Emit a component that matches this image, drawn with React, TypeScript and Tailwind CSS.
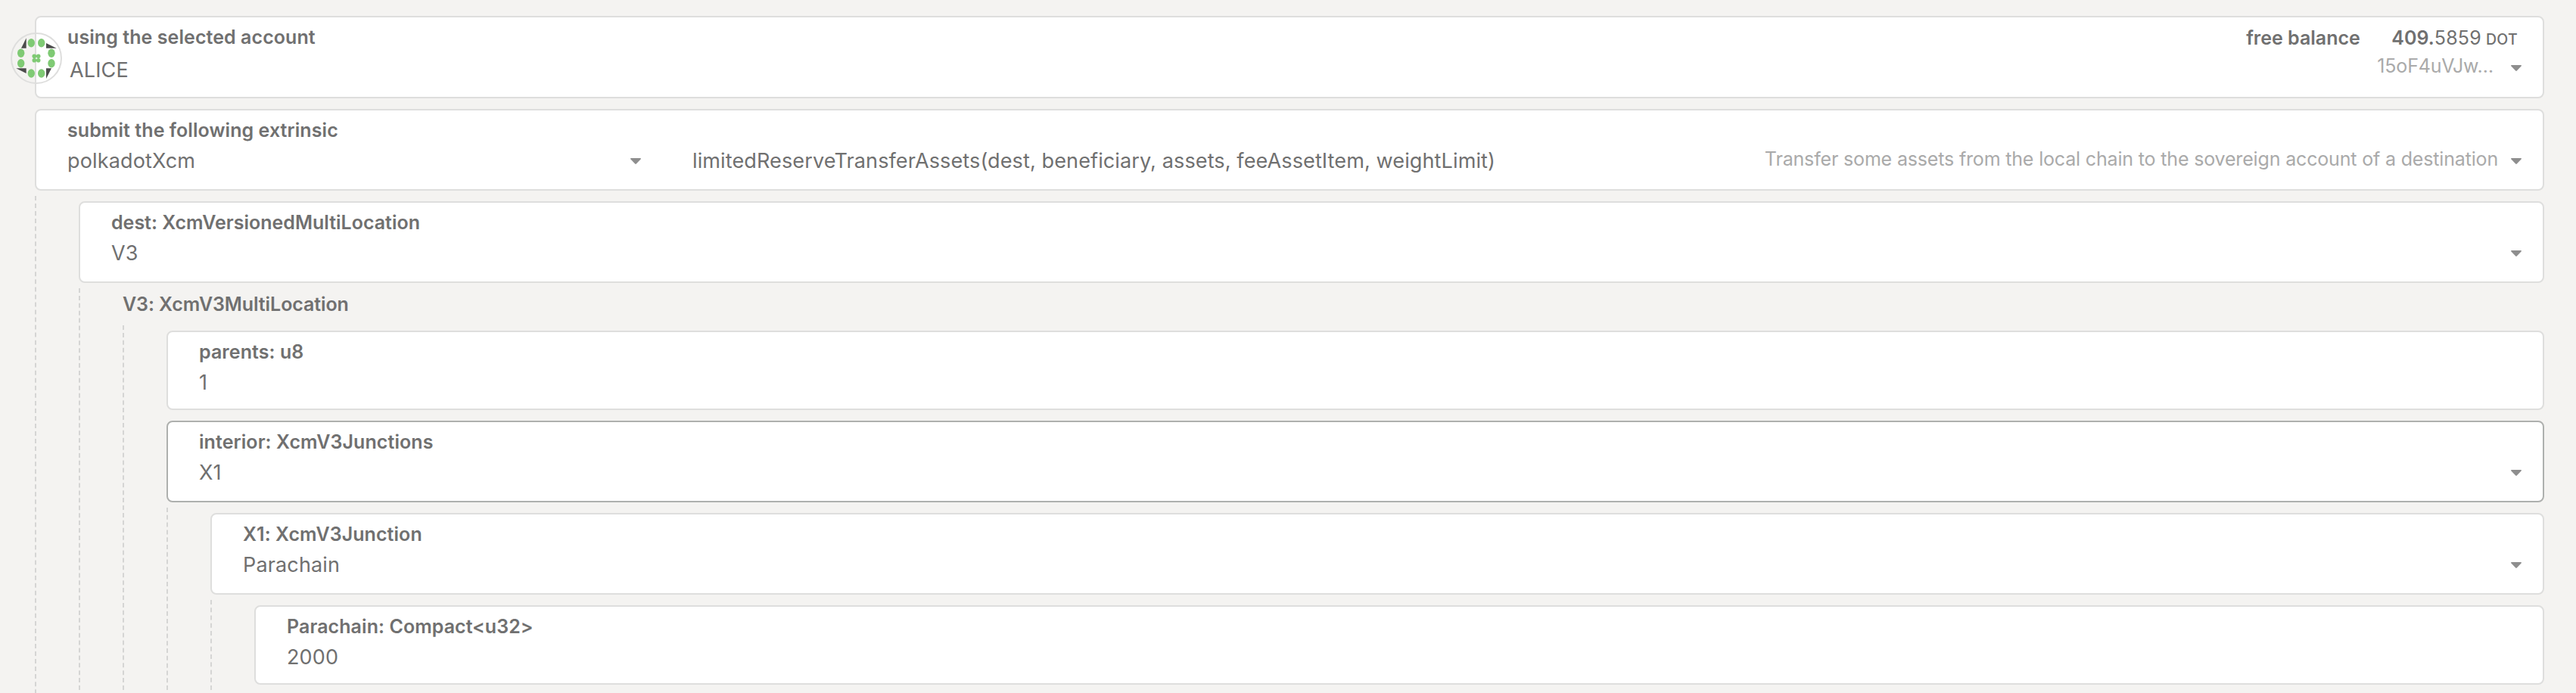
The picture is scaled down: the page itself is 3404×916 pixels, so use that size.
import type { ReactNode } from "react";

const GREEN = "#7fca74";
const DARK = "#4b4b4b";

function Caret() {
  return (
    <svg viewBox="0 0 14 8" className="mt-[17px] h-2 w-3.5 shrink-0 self-start">
      <path d="M0.9 0H13.1C14 0 14.2 1 13.6 1.6L7.8 7.5C7.3 8 6.7 8 6.2 7.5L0.4 1.6C-0.2 1 0 0 0.9 0Z" fill="#8e8e8e" />
    </svg>
  );
}

function Label({ children, tracking = "tracking-[0.07px]" }: { children: ReactNode; tracking?: string }) {
  return <div className={`text-[25px] leading-9 font-semibold whitespace-nowrap ${tracking}`}>{children}</div>;
}

function Value({ children }: { children: ReactNode }) {
  return <div className="text-[27px] leading-[41px] tracking-[0.15px] whitespace-nowrap">{children}</div>;
}

function Hint({ children }: { children: ReactNode }) {
  return <div className="text-[25px] leading-9 tracking-[-0.165px] whitespace-nowrap text-[#aaaaaa]">{children}</div>;
}

const box = "rounded-lg border-2 bg-white pt-2 pr-7 pl-[41px]";

type SelectProps = { label: string; value: string; focused?: boolean; tracking?: string };

function Select({ label, value, focused, tracking }: SelectProps) {
  return (
    <div className={`${box} h-[108px] ${focused ? "border-[#aeb0ae]" : "border-[#dededd]"}`}>
      <Label tracking={tracking}>{label}</Label>
      <div className="mt-0.5 flex justify-between">
        <Value>{value}</Value>
        <Caret />
      </div>
    </div>
  );
}

function Input({ label, value }: { label: string; value: string }) {
  return (
    <div className={`${box} h-[105px] border-[#dededd]`}>
      <Label>{label}</Label>
      <div className="mt-0.5">
        <Value>{value}</Value>
      </div>
    </div>
  );
}

function Nested({ children, className = "" }: { children: ReactNode; className?: string }) {
  return <div className={`border-l-2 border-dashed border-[#d5d5d4] pl-14 ${className}`}>{children}</div>;
}

function Identicon() {
  const outer = [
    [27.3, 13.7], [40.7, 13.7],
    [13.7, 27.3], [13.7, 40.7],
    [54, 27.3], [54, 40.7],
    [27.3, 54], [40.7, 54],
  ];
  const inner = [[31.3, 31.3], [36.7, 31.3], [31.3, 36.7], [36.7, 36.7]];
  return (
    <svg viewBox="0 0 68 68" className="absolute top-[20px] left-[-34px] size-[68px]">
      <circle cx="34" cy="34" r="33" fill="none" stroke="#dededd" strokeWidth="2" />
      <g fill={DARK}>
        <path d="M20.7 7.3V20.7H14Z" />
        <path d="M47 14V20.7H60.7Z" />
        <path d="M7.3 47.3H20.7V54Z" />
        <path d="M47 47.3H54L47 61Z" />
      </g>
      <g fill={GREEN}>
        {outer.map(([x, y]) => (
          <ellipse key={`${x}-${y}`} cx={x} cy={y} rx="4.7" ry="5.7" />
        ))}
        {inner.map(([x, y]) => (
          <circle key={`${x}-${y}`} cx={x} cy={y} r="2.8" />
        ))}
      </g>
    </svg>
  );
}

export default function App() {
  return (
    <div className="h-[916px] w-[3404px] overflow-hidden bg-[#f4f3f1] pt-[21px] pr-[42px] pl-[46px] font-['Inter',sans-serif] text-[#707070]">
      <div className={`${box} relative h-[109px] border-[#dededd]`}>
        <Identicon />
        <div className="flex h-9 justify-between">
          <Label>using the selected account</Label>
          <div className="flex items-baseline pt-px pr-[5px]">
            <Label tracking="tracking-normal">free balance</Label>
            <div className="ml-[41.5px] flex items-baseline text-[25px] leading-9">
              <span className="font-semibold">409.</span>
              <span className="tracking-[0.2px]">5859</span>
              <span className="ml-1.5 text-[19.5px] font-medium tracking-[0.3px]">DOT</span>
            </div>
          </div>
        </div>
        <div className="mt-0.5 flex justify-between">
          <div className="pt-[3px] pl-[3px]">
            <Value>ALICE</Value>
          </div>
          <div className="flex">
            <div className="mr-[23px]">
              <Hint>15oF4uVJw…</Hint>
            </div>
            <Caret />
          </div>
        </div>
      </div>

      <div className={`${box} mt-3.5 h-[108px] border-[#dededd]`}>
        <Label>submit the following extrinsic</Label>
        <div className="mt-0.5 flex">
          <div className="flex w-[758px] justify-between">
            <Value>polkadotXcm</Value>
            <Caret />
          </div>
          <div className="ml-[68px] flex flex-1">
            <div className="text-[27px] leading-[41px] tracking-[0.126px] whitespace-nowrap">
              limitedReserveTransferAssets(dest, beneficiary, assets, feeAssetItem, weightLimit)
            </div>
            <div className="mr-[17px] ml-auto">
              <Hint>Transfer some assets from the local chain to the sovereign account of a destination</Hint>
            </div>
            <Caret />
          </div>
        </div>
      </div>

      <Nested className="mt-[7px] h-[1200px] pt-[7px]">
        <Select label="dest: XcmVersionedMultiLocation" value="V3" tracking="tracking-normal" />
        <Nested className="mt-[7px]">
          <div className="h-[49px] pt-[3px]">
            <Label tracking="tracking-[-0.08px]">V3: XcmV3MultiLocation</Label>
          </div>
          <Nested className="pt-[7px]">
            <Input label="parents: u8" value="1" />
            <div className="h-3.5" />
            <Select label="interior: XcmV3Junctions" value="X1" focused />
            <Nested className="mt-[7px] pt-[7px]">
              <Select label="X1: XcmV3Junction" value="Parachain" />
              <Nested className="mt-[7px] py-[7px]">
                <Input label="Parachain: Compact<u32>" value="2000" />
              </Nested>
            </Nested>
          </Nested>
        </Nested>
      </Nested>
    </div>
  );
}
